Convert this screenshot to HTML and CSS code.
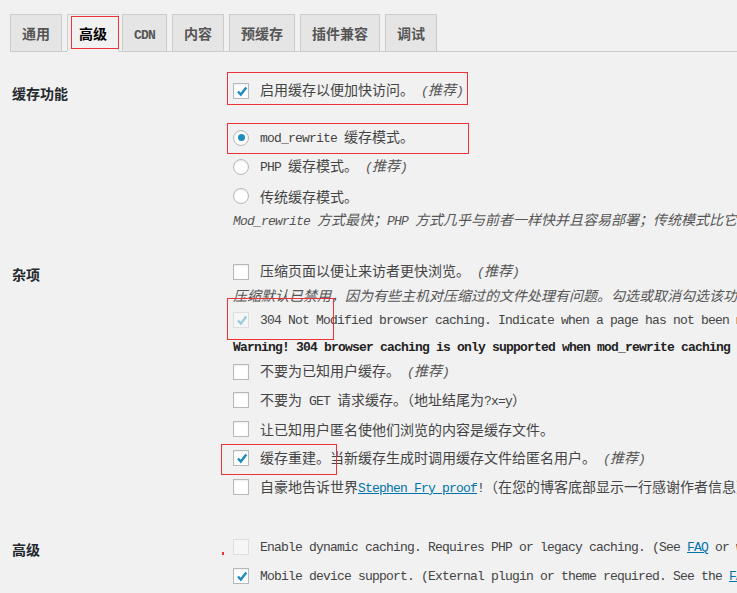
FILE: index.html
```html
<!DOCTYPE html>
<html lang="zh-CN">
<head>
<meta charset="utf-8">
<title>WP Super Cache 设置</title>
<link rel="stylesheet" href="styles.css">
</head>
<body>
<div class="wrap">
  <nav class="tabs">
    <a class="tab">通用</a>
    <a class="tab active">高级<span class="mark tab-mark"></span></a>
    <a class="tab"><span class="en">CDN</span></a>
    <a class="tab">内容</a>
    <a class="tab">预缓存</a>
    <a class="tab">插件兼容</a>
    <a class="tab">调试</a>
  </nav>

  <div class="row r1">
    <div class="label">缓存功能</div>
    <div class="field">
      <div class="line"><span class="cb"><svg viewBox="0 0 14 14"><path d="M4 7.5 L6.8 10.6 L12.3 3.4"/></svg></span><span class="txt">启用缓存以便加快访问。<span class="en"> </span><span class="rec"><span class="en">(</span>推荐<span class="en">)</span></span></span><span class="mark m1"></span></div>
      <div class="line gap"><span class="rd on"></span><span class="txt"><span class="en">mod_rewrite </span>缓存模式。</span><span class="mark m2"></span></div>
      <div class="line"><span class="rd"></span><span class="txt"><span class="en">PHP </span>缓存模式。<span class="en"> </span><span class="rec"><span class="en">(</span>推荐<span class="en">)</span></span></span></div>
      <div class="line"><span class="rd"></span><span class="txt">传统缓存模式。</span></div>
      <div class="desc"><span class="en">Mod_rewrite </span>方式最快；<span class="en">PHP </span>方式几乎与前者一样快并且容易部署；传统模式比它们都要慢，但是最灵活。</div>
    </div>
  </div>

  <div class="row r2">
    <div class="label">杂项</div>
    <div class="field">
      <div class="line"><span class="cb"></span><span class="txt">压缩页面以便让来访者更快浏览。<span class="en"> </span><span class="rec"><span class="en">(</span>推荐<span class="en">)</span></span></span></div>
      <div class="desc">压缩默认已禁用，因为有些主机对压缩过的文件处理有问题。勾选或取消勾选该功能会删除所有缓存文件。</div>
      <div class="line"><span class="cb dis"><svg viewBox="0 0 14 14"><path d="M4 7.5 L6.8 10.6 L12.3 3.4"/></svg></span><span class="txt"><span class="en">304 Not Modified browser caching. Indicate when a page has not been modified since it was last requested.</span></span><span class="mark m3"></span></div>
      <div class="warn en">Warning! 304 browser caching is only supported when mod_rewrite caching is not used.</div>
      <div class="line"><span class="cb"></span><span class="txt">不要为已知用户缓存。<span class="en"> </span><span class="rec"><span class="en">(</span>推荐<span class="en">)</span></span></span></div>
      <div class="line short"><span class="cb"></span><span class="txt">不要为<span class="en"> GET </span>请求缓存。（地址结尾为<span class="en">?x=y</span>）</span></div>
      <div class="line"><span class="cb"></span><span class="txt">让已知用户匿名使他们浏览的内容是缓存文件。</span></div>
      <div class="line tall"><span class="cb"><svg viewBox="0 0 14 14"><path d="M4 7.5 L6.8 10.6 L12.3 3.4"/></svg></span><span class="txt">缓存重建。当新缓存生成时调用缓存文件给匿名用户。<span class="en"> </span><span class="rec"><span class="en">(</span>推荐<span class="en">)</span></span></span><span class="mark m4"></span></div>
      <div class="line short"><span class="cb"></span><span class="txt">自豪地告诉世界<a class="lnk en">Stephen Fry proof</a><span class="en">!</span>（在您的博客底部显示一行感谢作者信息）</span></div>
    </div>
  </div>

  <div class="row r3">
    <div class="label">高级</div>
    <div class="field">
      <div class="line"><span class="cb dis"></span><span class="txt"><span class="en">Enable dynamic caching. Requires PHP or legacy caching. (See <a class="lnk">FAQ</a> or wp-super-cache/plugins/dynamic-cache-test.php for example code.)</span></span><span class="dot"></span></div>
      <div class="line"><span class="cb"><svg viewBox="0 0 14 14"><path d="M4 7.5 L6.8 10.6 L12.3 3.4"/></svg></span><span class="txt"><span class="en">Mobile device support. (External plugin or theme required. See the <a class="lnk">FAQ</a> for further details.)</span></span></div>
    </div>
  </div>
</div>
</body>
</html>
```

FILE: styles.css
```css
html, body {
  margin: 0;
  padding: 0;
  background: #f1f1f1;
  overflow: hidden;
}

body {
  font-family: "Noto Sans CJK SC", sans-serif;
  font-size: 14px;
  color: #444;
}

.en {
  font-family: "Liberation Mono", "Noto Sans CJK SC", monospace;
  font-size: 13px;
  letter-spacing: -0.8px;
}

.wrap {
  padding-left: 10px;
}

/* tabs */
.tabs {
  display: flex;
  align-items: flex-end;
  gap: 5px;
  padding-top: 14px;
  border-bottom: 1px solid #ccc;
}

.tab {
  position: relative;
  box-sizing: border-box;
  height: 38px;
  margin-bottom: -1px;
  padding: 6px 11px;
  border: 1px solid #ccc;
  background: #e5e5e5;
  color: #555;
  font-weight: 700;
  font-size: 14px;
  line-height: 24px;
  white-space: nowrap;
}

.tab .en {
  font-weight: 700;
  font-size: 13px;
}

.tab.active {
  background: #f1f1f1;
  color: #000;
  border-bottom-color: #f1f1f1;
  margin-right: -2px;
}

/* annotation boxes */
.mark {
  position: absolute;
  z-index: 5;
  box-sizing: border-box;
  border: 1px solid #ee3338;
  pointer-events: none;
}

.tab-mark { left: 3px; top: 1px; width: 48px; height: 33px; }
.m1 { left: -6px; top: -4px; width: 241px; height: 33px; }
.m2 { left: -6px; top: 0; width: 242px; height: 31px; }
.m3 { left: -6px; top: -7px; width: 107px; height: 42px; }
.m4 { left: -12px; top: 1px; width: 116px; height: 31px; }

.dot {
  position: absolute;
  left: -11px;
  top: 20px;
  width: 2px;
  height: 3px;
  background: #ee3338;
}

/* form rows */
.row {
  display: grid;
  grid-template-columns: 223px 1fr;
}

.r1 { padding-top: 24px; }
.r2 { padding-top: 29px; }
.r3 { padding-top: 31px; }

.label {
  font-weight: 700;
  color: #23282d;
  font-size: 14px;
  line-height: 29px;
  padding-top: 3px;
  padding-left: 2px;
}

.field {
  position: relative;
  min-width: 0;
}

.line {
  position: relative;
  display: flex;
  align-items: center;
  height: 29px;
  white-space: nowrap;
}

.line.short { height: 28px; }
.line.tall { height: 30px; }

.r1 .gap { margin-top: 18px; }

.txt {
  margin-left: 11px;
  line-height: 28px;
}

.rec {
  font-style: italic;
  color: #555;
}

.desc {
  height: 19px;
  line-height: 19px;
  font-style: italic;
  color: #555;
  white-space: nowrap;
}

.r1 .desc { height: 18px; line-height: 18px; }

.warn {
  height: 18px;
  line-height: 18px;
  margin-top: 5px;
  font-weight: 700;
  color: #222;
  white-space: nowrap;
}

.lnk {
  color: #0073aa;
  text-decoration: underline;
}

/* checkbox & radio */
.cb, .rd {
  flex-shrink: 0;
  box-sizing: border-box;
  width: 16px;
  height: 16px;
  border: 1px solid #b4b9be;
  background: #fff;
  box-shadow: inset 0 1px 2px rgba(0, 0, 0, 0.08);
  display: flex;
  align-items: center;
  justify-content: center;
}

.cb svg {
  width: 14px;
  height: 14px;
  fill: none;
  stroke: #1e8cbe;
  stroke-width: 2.4;
}

.cb.dis {
  border-color: #dedede;
  background: #f6f6f6;
  box-shadow: none;
}

.cb.dis svg {
  stroke: #9fcbe2;
}

.rd {
  border-radius: 50%;
}

.rd.on::before {
  content: "";
  width: 7px;
  height: 7px;
  border-radius: 50%;
  background: #1e8cbe;
}
```
